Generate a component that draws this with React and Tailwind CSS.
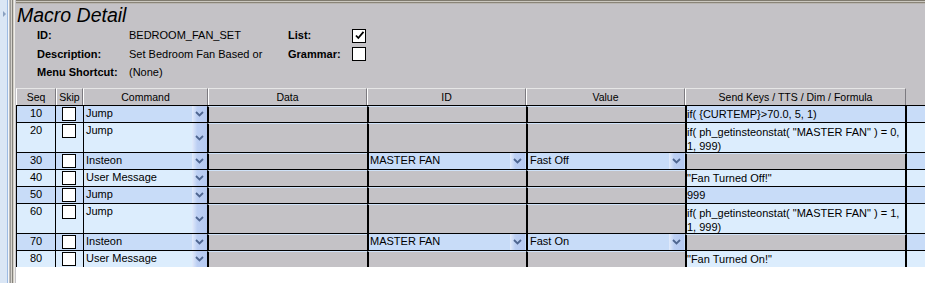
import React from 'react';

const rows = [
  { seq: 10, cmd: 'Jump', send: ['if( {CURTEMP}>70.0, 5, 1)'], dark: true },
  { seq: 20, cmd: 'Jump', send: ['if( ph_getinsteonstat( "MASTER FAN" ) = 0,', '1, 999)'], tall: true },
  { seq: 30, cmd: 'Insteon', id: 'MASTER FAN', value: 'Fast Off', dark: true },
  { seq: 40, cmd: 'User Message', send: ['"Fan Turned Off!"'] },
  { seq: 50, cmd: 'Jump', send: ['999'], dark: true },
  { seq: 60, cmd: 'Jump', send: ['if( ph_getinsteonstat( "MASTER FAN" ) = 1,', '1, 999)'], tall: true },
  { seq: 70, cmd: 'Insteon', id: 'MASTER FAN', value: 'Fast On', dark: true },
  { seq: 80, cmd: 'User Message', send: ['"Fan Turned On!"'] },
];

function Drop() {
  return (
    <div className="w-[15px] shrink-0 self-stretch flex items-center justify-center bg-[linear-gradient(90deg,#e2ebfb,#bccff3_35%,#b5c9f1)]">
      <svg width="9" height="6" viewBox="0 0 9 6">
        <polyline points="1,1 4.5,4.5 8,1" fill="none" stroke="#4e6590" strokeWidth="1.8" />
      </svg>
    </div>
  );
}

function Gray({ w }) {
  return <div className={`${w} shrink-0 self-stretch bg-[#c4c2c6] border-l-2 border-l-black border-t border-t-[#cfe2f9]`} />;
}

function HeaderCell({ w, children }) {
  return (
    <div className={`${w} shrink-0 h-full flex items-center justify-center border-l border-l-white border-r border-r-[#7c7a80] border-t border-t-[#e6e6e6] bg-[#c4c2c6] text-[10.5px] leading-none`}>
      {children}
    </div>
  );
}

export default function App() {
  return (
    <div className="w-[925px] h-[283px] overflow-hidden bg-white flex font-['Liberation_Sans',Arial,sans-serif] text-black">
      {/* left frame */}
      <div className="w-[7px] h-full bg-[#dae6f5] relative shrink-0">
        <div className="absolute left-[3px] top-[11px] w-0 h-0 border-t-[3px] border-t-transparent border-b-[3px] border-b-transparent border-l-[3px] border-l-[#8aa0c0]" />
      </div>
      <div className="w-[1px] h-full bg-[#9dbbe3] shrink-0" />
      <div className="w-[1px] h-full bg-[#f4f6fa] shrink-0" />
      <div className="w-[1px] h-full bg-[#bcbcbc] shrink-0" />
      <div className="w-[1px] h-full bg-[#9c9a96] shrink-0" />
      <div className="w-[1px] h-full bg-[#d6d3cc] shrink-0" />
      <div className="w-[1px] h-full bg-[#84827c] shrink-0" />
      <div className="w-[1px] h-full bg-[#d4d0c8] shrink-0" />
      <div className="w-[1px] h-full bg-[#ecebe8] shrink-0" />
      <div className="w-[1px] h-full bg-[#c4c2c6] shrink-0" />

      {/* main */}
      <div className="flex-1 flex flex-col min-w-0">
        <div className="h-[1px] bg-[#7f7a6e]" />
        <div className="h-[1px] bg-[#cbc8c0]" />
        <div className="h-[1px] bg-[#8a8478]" />
        <div className="h-[1px] bg-[#b8b5b0]" />

        <div className="bg-[#c4c2c6] pb-[7px]">
          <div className="h-[22px] pl-[1px] text-[19.5px] leading-[22px] italic">Macro Detail</div>
          <div className="grid grid-cols-[92px_159px_64px_14px] grid-rows-[19px_18px_18px] pl-[21px] text-[11px] items-center">
            <div className="font-bold">ID:</div>
            <div>BEDROOM_FAN_SET</div>
            <div className="font-bold">List:</div>
            <div className="w-[14px] h-[14px] bg-white border border-black flex items-center justify-center">
              <svg width="11" height="11" viewBox="0 0 11 11">
                <path d="M2 5.5 L4.3 8 L9.5 1.8" fill="none" stroke="#000" strokeWidth="1.8" />
              </svg>
            </div>
            <div className="font-bold">Description:</div>
            <div>Set Bedroom Fan Based or</div>
            <div className="font-bold">Grammar:</div>
            <div className="w-[14px] h-[14px] bg-white border border-black" />
            <div className="font-bold whitespace-nowrap">Menu Shortcut:</div>
            <div>(None)</div>
            <div />
            <div />
          </div>
        </div>

        {/* table header */}
        <div className="h-[17px] flex bg-[#c4c2c6]">
          <HeaderCell w="w-[40px]">Seq</HeaderCell>
          <HeaderCell w="w-[27px]">Skip</HeaderCell>
          <HeaderCell w="w-[125px]">Command</HeaderCell>
          <HeaderCell w="w-[159px]">Data</HeaderCell>
          <HeaderCell w="w-[159px]">ID</HeaderCell>
          <HeaderCell w="w-[159px]">Value</HeaderCell>
          <HeaderCell w="w-[221px]">Send Keys / TTS / Dim / Formula</HeaderCell>
          <div className="flex-1" />
        </div>

        {/* rows */}
        {rows.map((r) => (
          <div
            key={r.seq}
            className={`flex border-t border-black text-[11px] leading-[15px] ${r.tall ? 'h-[30px]' : 'h-[17px]'} ${r.dark ? 'bg-[#c8dcf8]' : 'bg-[#dcedfd]'}`}
          >
            <div className="w-[40px] shrink-0 border-x border-black text-center">{r.seq}</div>
            <div className="w-[27px] shrink-0">
              <div className="ml-[6px] mt-[1px] w-[14px] h-[14px] bg-white border border-black" />
            </div>
            <div className="w-[124px] shrink-0 border-l border-black flex">
              <div className="flex-1 pl-[2px] whitespace-nowrap overflow-hidden">{r.cmd}</div>
              <Drop />
            </div>
            <Gray w="w-[160px]" />
            {r.id ? (
              <div className="w-[159px] shrink-0 border-l-2 border-black flex">
                <div className="flex-1 pl-[1px] whitespace-nowrap">{r.id}</div>
                <Drop />
                <div className="w-[1px]" />
              </div>
            ) : (
              <Gray w="w-[159px]" />
            )}
            {r.value ? (
              <div className="w-[159px] shrink-0 border-l-2 border-black flex">
                <div className="flex-1 pl-[2px] whitespace-nowrap">{r.value}</div>
                <Drop />
                <div className="w-[1px]" />
              </div>
            ) : (
              <Gray w="w-[159px]" />
            )}
            {r.send ? (
              <div className={`w-[222px] shrink-0 border-x-2 border-black whitespace-nowrap leading-[14px] ${r.tall ? 'pt-[2px]' : 'pt-[1px]'}`}>
                {r.send.map((l, i) => (
                  <div key={i}>{l}</div>
                ))}
              </div>
            ) : (
              <div className="w-[222px] shrink-0 self-stretch bg-[#c4c2c6] border-x-2 border-x-black border-t border-t-[#cfe2f9]" />
            )}
            <div className="flex-1" />
          </div>
        ))}
        <div className="flex-1 bg-white" />
      </div>
    </div>
  );
}
